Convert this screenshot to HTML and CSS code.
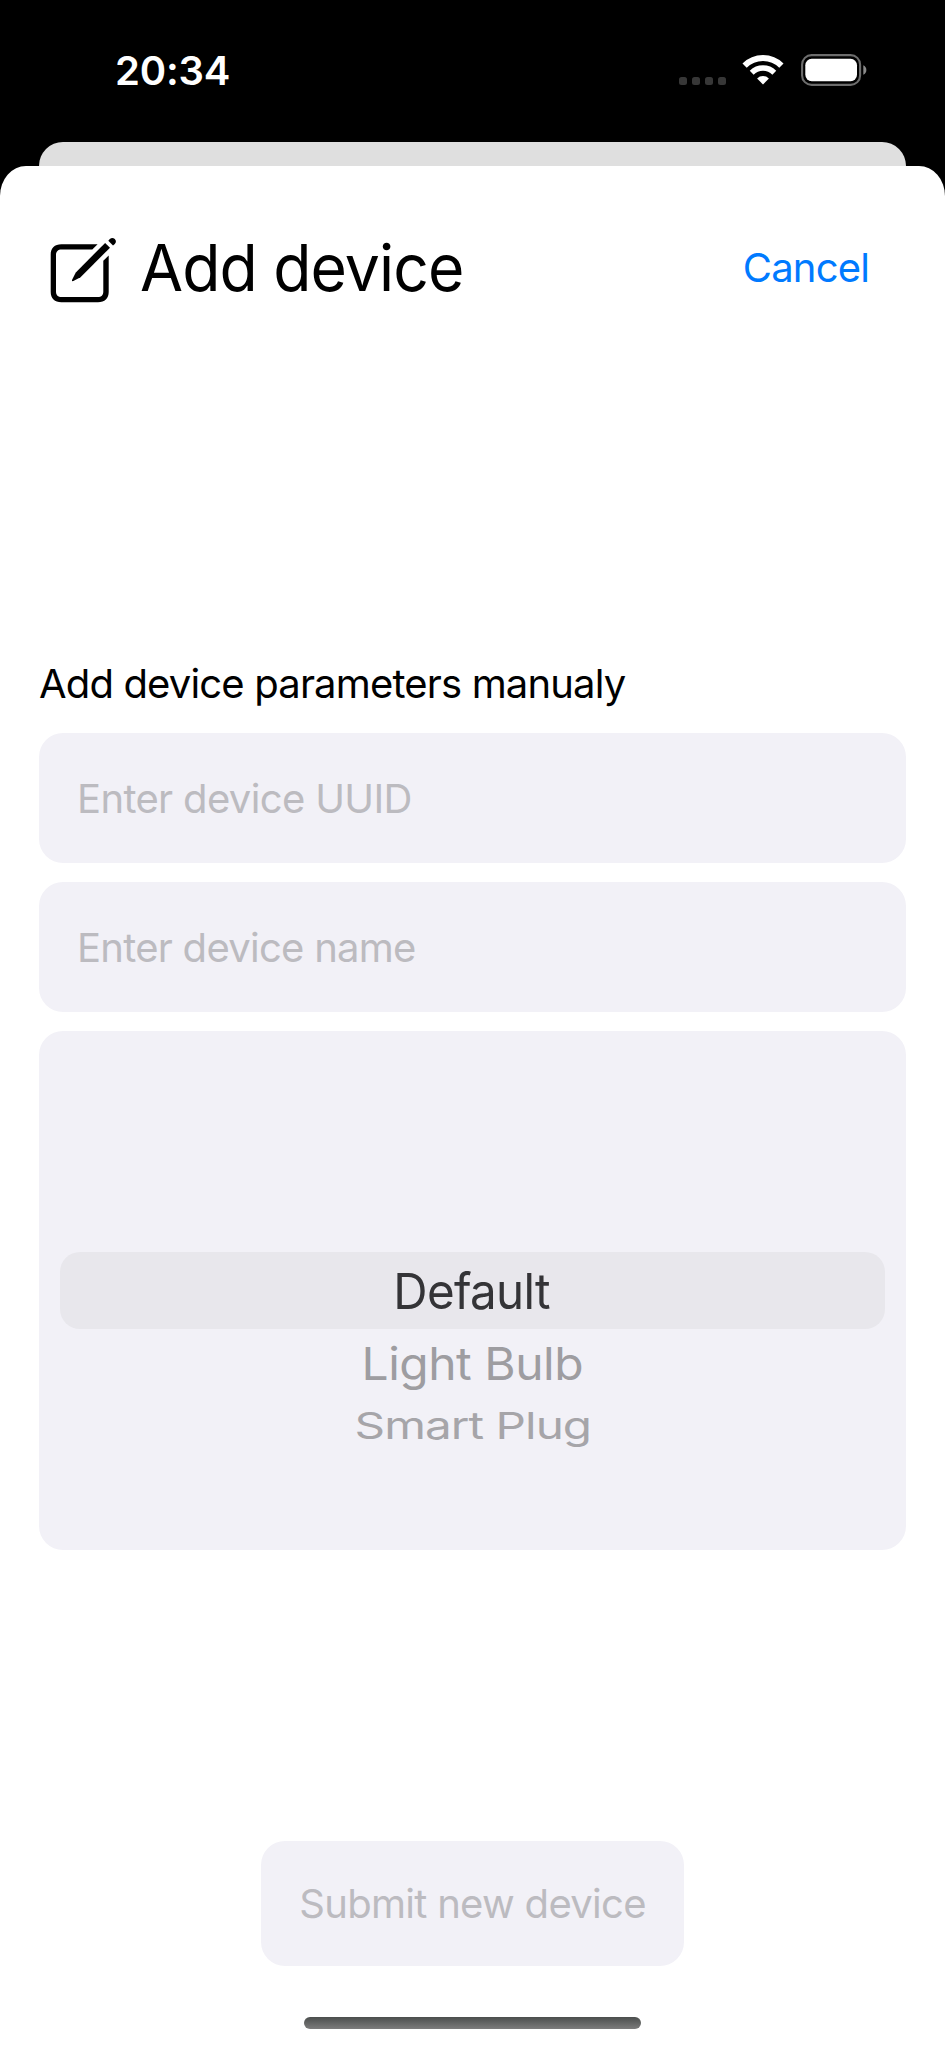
FILE: index.html
```html
<!DOCTYPE html>
<html lang="en">
<head>
<meta charset="utf-8">
<title>Add device</title>
<link rel="stylesheet" href="styles.css">
</head>
<body>
<div class="screen">
  <header class="status-bar">
    <span class="time">20:34</span>
    <div class="status-icons">
      <div class="cellular"><i></i><i></i><i></i><i></i></div>
      <svg class="wifi" width="42" height="32" viewBox="0 0 42 32" fill="none" stroke="#fff">
        <path d="M2.6 11.6A26 26 0 0 1 39.4 11.6" stroke-width="6"/>
        <path d="M9.7 18.7A16 16 0 0 1 32.3 18.7" stroke-width="5.5"/>
        <path d="M15.1 24.4A8.6 8.6 0 0 1 26.9 24.4L21 30.6Z" fill="#fff" stroke="none"/>
      </svg>
      <svg class="battery" width="67" height="32" viewBox="0 0 67 32">
        <rect x="1.1" y="1.1" width="58" height="29.8" rx="9.5" fill="none" stroke="#6d6d6d" stroke-width="2.1"/>
        <rect x="4.3" y="4.8" width="51.7" height="22.4" rx="6.4" fill="#fff"/>
        <path d="M62.3 11.2C66.4 13 66.4 19 62.3 20.8Z" fill="#8a8a8a"/>
      </svg>
    </div>
  </header>
  <div class="back-sheet"></div>
  <main class="sheet">
    <div class="sheet-header">
      <svg class="compose" width="70" height="68" viewBox="0 0 70 68">
        <path d="M49.6 8.3H13.4C6.6 8.3 2.7 12.2 2.7 18.6V56C2.7 62.4 6.6 66.3 13.4 66.3H50C56.8 66.3 60.7 62.4 60.7 56V19.5L55.3 24.7V55.4C55.3 59 53.4 61 49.8 61H13.6C10 61 8 59 8 55.4V19.2C8 15.6 10 13.6 13.6 13.6H44.3Z"/>
        <path d="M57.1 6.9L62 11.7L32.5 41.2L25.4 45.1Q23.4 45.7 24.1 43.7L27.8 36.4Z"/>
        <path d="M60.3 4.8L61.8 3Q64.3.8 66.8 3Q69 5.4 66.8 7.9L65 9.6Z"/>
      </svg>
      <h1 class="title">Add device</h1>
      <a class="cancel">Cancel</a>
    </div>
    <div class="form">
      <p class="form-label">Add device parameters manualy</p>
      <div class="field uuid">Enter device UUID</div>
      <div class="field name">Enter device name</div>
      <div class="picker">
        <div class="row selected"><span>Default</span></div>
        <div class="row next"><span>Light Bulb</span></div>
        <div class="row last"><span>Smart Plug</span></div>
      </div>
    </div>
    <div class="submit">Submit new device</div>
    <div class="home-indicator"></div>
  </main>
</div>
</body>
</html>
```
FILE: styles.css
```css
* { box-sizing: border-box; }

body {
  margin: 0;
  background: #000;
  font-family: Inter, "Liberation Sans", sans-serif;
  font-size: 40px;
  line-height: 48px;
  color: #000;
}

.screen {
  display: flex;
  flex-direction: column;
  width: 945px;
  height: 2048px;
  overflow: hidden;
}

.status-bar {
  display: flex;
  justify-content: space-between;
  align-items: flex-start;
  flex: none;
  height: 142px;
  padding: 47px 77px 0 115px;
  color: #fff;
}

.time {
  font-weight: 570;
  letter-spacing: -0.2px;
}

.status-icons {
  display: flex;
  align-items: flex-end;
  padding-top: 7px;
}

.cellular {
  display: flex;
  gap: 5px;
  margin: 0 16px 1px 0;
}

.cellular i {
  width: 8px;
  height: 8px;
  border-radius: 2.5px;
  background: #373737;
}

.wifi { margin-right: 17.5px; }

.back-sheet {
  flex: none;
  height: 24px;
  margin: 0 39px;
  border-radius: 24px 24px 0 0;
  background: #dfdfdf;
}

.sheet {
  display: flex;
  flex-direction: column;
  flex: 1;
  padding: 62px 39px 0;
  border-radius: 26px 26px 0 0 / 30px 30px 0 0;
  background: #fff;
}

.sheet-header {
  display: flex;
  align-items: center;
  height: 80px;
  padding: 0 37px 0 9px;
}

.compose { margin: 4px 22px 0 0; }

.title {
  margin: 0;
  font-size: 65px;
  font-weight: 400;
  line-height: 80px;
  letter-spacing: -1px;
  transform: scaleX(0.961);
  transform-origin: left;
}

.cancel {
  margin-left: auto;
  color: #007aff;
  letter-spacing: -0.84px;
}

.form {
  display: flex;
  flex-direction: column;
  gap: 19px;
  padding-top: 352px;
}

.form-label {
  margin: 0 0 6px;
  letter-spacing: -0.84px;
}

.field {
  height: 130px;
  padding: 42px 38px 40px;
  border-radius: 24px;
  background: #f2f1f7;
  color: #bcbbc0;
}

.uuid { letter-spacing: -0.65px; }

.name { letter-spacing: -0.73px; }

.picker {
  height: 519px;
  padding: 221px 21px 0;
  border-radius: 24px;
  background: #f2f1f7;
  font-size: 49.5px;
}

.row {
  display: flex;
  align-items: center;
  justify-content: center;
}

.selected {
  height: 77px;
  border-radius: 20px;
  background: #e8e7ec;
  color: #343437;
  letter-spacing: -0.7px;
}

.selected span {
  margin-right: 2px;
  transform: scaleX(0.96);
}

/* Rows below the selection flatten as they roll off the wheel */
.next {
  height: 67px;
  color: #9e9da1;
  letter-spacing: -0.5px;
}

.next span { transform: scale(0.969, 0.92); }

.last {
  height: 58px;
  color: #a6a5a9;
  letter-spacing: -1px;
}

.last span { transform: scale(0.963, 0.75); }

.submit {
  align-self: center;
  width: 423px;
  height: 125px;
  margin-top: 291px;
  border-radius: 24px;
  background: #f2f1f7;
  color: #bcbbc0;
  line-height: 125px;
  text-align: center;
  letter-spacing: -0.7px;
}

.home-indicator {
  align-self: center;
  width: 337px;
  height: 12px;
  margin-top: 51px;
  border-radius: 6px;
  background: linear-gradient(#4b4e4d, #7c7c7c);
}
```
